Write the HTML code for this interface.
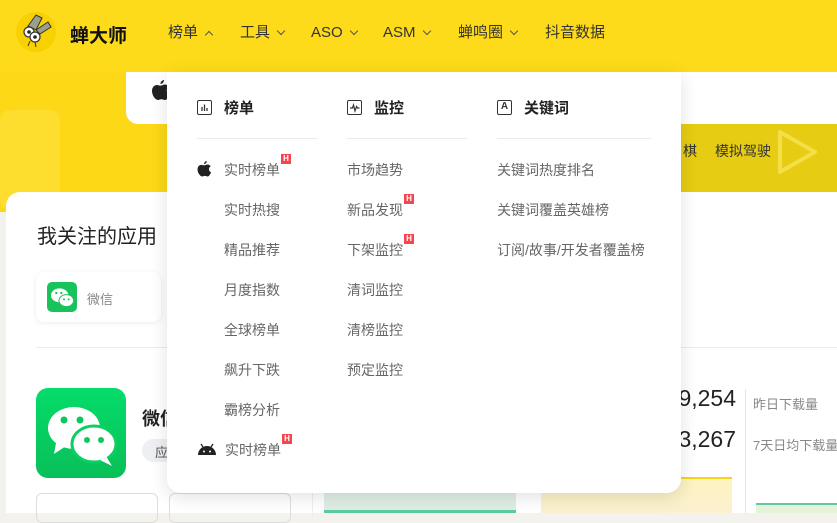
<!DOCTYPE html>
<html><head><meta charset="utf-8"><style>
*{margin:0;padding:0;box-sizing:border-box}
body{width:837px;height:513px;overflow:hidden;position:relative;background:#f3f2ec;font-family:"Liberation Sans","Noto Sans CJK SC",sans-serif;}
.abs{position:absolute}
.hdr{left:0;top:0;width:837px;height:72px;background:#fddb1a}
.ban{left:0;top:72px;width:837px;height:140px;background:#fcd816}
.nav{top:23px;height:20px;line-height:20px;font-size:15px;color:#333;white-space:nowrap;display:flex;align-items:center}
.nav .c{display:inline-block;width:6px;height:6px;border-right:1px solid #555;border-bottom:1px solid #555;transform:rotate(45deg);margin-left:8px;position:relative;top:-2px}
.nav .u{transform:rotate(-135deg);top:2px}
.card{background:#fff}
.dd{left:167px;top:72px;width:514px;height:421px;background:#fff;border-radius:0 0 14px 14px;box-shadow:0 4px 18px rgba(0,0,0,.12)}
.hd{font-size:15px;font-weight:bold;color:#222;top:97px}
.ln{height:1px;background:#e9eaf0;top:138px}
.it{font-size:14px;color:#666;white-space:nowrap}
.H{display:inline-block;width:10px;height:10px;background:#f5454f;color:#fff;font-size:8px;font-weight:bold;line-height:10px;text-align:center;position:absolute;right:-11px;top:-6px}
.ic{width:15px;height:15px;border:1.5px solid #333;border-radius:2px}
</style></head><body>
<div class="abs hdr"></div>
<div class="abs ban"></div>
<div class="abs" style="left:255px;top:150px;width:120px;height:120px;border-radius:50%;border:14px solid rgba(220,190,10,.4)"></div>
<div class="abs" style="left:0;top:110px;width:60px;height:100px;background:rgba(255,235,120,.25);border-radius:10px"></div>
<!-- logo -->
<div class="abs" style="left:16px;top:12px;width:40px;height:40px;border-radius:50%;background:#f8d100"></div>
<svg class="abs" style="left:16px;top:12px" width="40" height="40" viewBox="0 0 40 40">
<path d="M12 14 L20 3 L26 6 L20 18Z" fill="#9aa08a" stroke="#333" stroke-width="1"/>
<path d="M20 18 L32 10 L35 15 L24 22Z" fill="#9aa08a" stroke="#333" stroke-width="1"/>
<circle cx="13" cy="20" r="5" fill="#fff" stroke="#333" stroke-width="1.2"/><circle cx="19" cy="25" r="5" fill="#fff" stroke="#333" stroke-width="1.2"/>
<circle cx="13" cy="20" r="1.8" fill="#222"/><circle cx="19" cy="25" r="1.8" fill="#222"/>
<path d="M14 29 L12 34 M19 30 L20 35" stroke="#333" stroke-width="1"/>
</svg>
<div class="abs" style="left:70px;top:21px;font-size:19px;font-weight:bold;color:#111">蝉大师</div>
<div class="abs nav" style="left:168px">榜单<span class="c u"></span></div>
<div class="abs nav" style="left:240px">工具<span class="c"></span></div>
<div class="abs nav" style="left:311px">ASO<span class="c"></span></div>
<div class="abs nav" style="left:383px">ASM<span class="c"></span></div>
<div class="abs nav" style="left:458px">蝉鸣圈<span class="c"></span></div>
<div class="abs nav" style="left:545px">抖音数据</div>
<!-- top white card -->
<div class="abs card" style="left:126px;top:72px;width:711px;height:52px;border-radius:0 0 0 12px"></div>
<svg class="abs" style="left:152px;top:80px" width="18" height="22" viewBox="0 0 18 22"><path d="M12 0c0 2-1.5 4-3.5 4C8.3 2 10 .3 12 0zM9 5.5c1.3 0 2.5-1 4-1 1.5 0 3 .8 4 2.3-3.3 1.8-2.8 6.5.5 7.7-.8 2.300-2.5 5.5-4.5 5.5-1.3 0-1.8-.8-3.5-.8s-2.3.8-3.5.8C3.5 20 0 15.5 0 11c0-4 2.5-6 5-6 1.5 0 2.8 1 4 .5z" fill="#222"/></svg>
<div class="abs" style="left:681px;top:124px;width:156px;height:68px;background:#e6cc12"></div>
<div class="abs" style="left:683px;top:141px;font-size:14px;color:#333;white-space:nowrap">棋</div>
<div class="abs" style="left:715px;top:141px;font-size:14px;color:#333;white-space:nowrap">模拟驾驶</div>
<svg class="abs" style="left:775px;top:127px" width="45" height="50"><path d="M5 5 L40 25 L5 45Z" fill="none" stroke="rgba(255,235,110,.6)" stroke-width="4" stroke-linejoin="round"/></svg>
<!-- main card -->
<div class="abs card" style="left:6px;top:192px;width:831px;height:321px;border-radius:14px 0 0 0"></div>
<div class="abs" style="left:37px;top:220px;font-size:20px;color:#222">我关注的应用</div>
<div class="abs" style="left:36px;top:272px;width:125px;height:50px;border-radius:8px;background:#fff;box-shadow:0 1px 6px rgba(0,0,0,.08)"></div>
<div class="abs" style="left:47px;top:282px;width:30px;height:30px;border-radius:5px;background:#17c35a"></div>
<svg class="abs" style="left:47px;top:282px" width="30" height="30" viewBox="0 0 90 90"><ellipse cx="38" cy="40" rx="26" ry="21" fill="#fff"/><ellipse cx="58" cy="56" rx="22" ry="18" fill="#fff" stroke="#17c35a" stroke-width="3"/><circle cx="28" cy="33" r="3.5" fill="#17c35a"/><circle cx="43" cy="33" r="3.5" fill="#17c35a"/><circle cx="51" cy="52" r="3" fill="#17c35a"/><circle cx="65" cy="52" r="3" fill="#17c35a"/></svg>
<div class="abs" style="left:87px;top:289px;font-size:13px;color:#888">微信</div>
<div class="abs" style="left:36px;top:347px;width:801px;height:1px;background:#ececec"></div>
<div class="abs" style="left:36px;top:388px;width:90px;height:90px;border-radius:12px;background:linear-gradient(#06dc6a,#08bf58)"></div>
<svg class="abs" style="left:36px;top:388px" width="90" height="90" viewBox="0 0 90 90"><ellipse cx="38" cy="40" rx="26" ry="21" fill="#fff"/><path d="M20 55 L18 66 L30 58Z" fill="#fff"/><ellipse cx="58" cy="56" rx="22" ry="18" fill="#fff" stroke="#0ad062" stroke-width="3"/><path d="M70 68 L76 78 L64 72Z" fill="#fff"/><circle cx="28" cy="32" r="3.5" fill="#0bc85e"/><circle cx="44" cy="32" r="3.5" fill="#0bc85e"/><circle cx="51" cy="52" r="3" fill="#0bc85e"/><circle cx="65" cy="52" r="3" fill="#0bc85e"/></svg>
<div class="abs" style="left:142px;top:405px;font-size:18px;font-weight:bold;color:#222">微信</div>
<div class="abs" style="left:142px;top:439px;height:23px;border-radius:12px;background:#eeeff3;font-size:13px;color:#555;padding:3px 13px;white-space:nowrap">应用</div>
<div class="abs" style="left:36px;top:493px;width:122px;height:30px;border:1px solid #ddd;border-radius:6px"></div>
<div class="abs" style="left:169px;top:493px;width:122px;height:30px;border:1px solid #ddd;border-radius:6px"></div>
<div class="abs" style="left:312px;top:480px;width:1px;height:40px;background:#eee"></div>
<div class="abs" style="left:324px;top:493px;width:192px;height:20px;background:#dfeee5;border-bottom:3px solid #5fc9a0"></div>
<div class="abs" style="left:541px;top:477px;width:191px;height:36px;background:linear-gradient(#fdf3c0,#fbf0d0);border-top:2px solid #f5d41a"></div>
<div class="abs" style="left:620px;top:385px;font-size:23px;color:#222;width:116px;text-align:right">9,254</div>
<div class="abs" style="left:620px;top:426px;font-size:23px;color:#222;width:116px;text-align:right">3,267</div>
<div class="abs" style="left:745px;top:389px;width:1px;height:124px;background:#e6e8ef"></div>
<div class="abs" style="left:753px;top:394px;font-size:13px;color:#888">昨日下载量</div>
<div class="abs" style="left:753px;top:435px;font-size:13px;color:#888;white-space:nowrap">7天日均下载量</div>
<div class="abs" style="left:756px;top:503px;width:81px;height:10px;background:#e5f3d8;border-top:2px solid #5fc9a0"></div>
<!-- dropdown -->
<div class="abs dd"></div>
<div class="abs ic" style="left:197px;top:100px"></div>
<svg class="abs" style="left:197px;top:100px" width="15" height="15"><path d="M5 11V7M7.5 11V4.5M10 11V8" stroke="#333" stroke-width="1.3"/></svg>
<div class="abs hd" style="left:224px">榜单</div>
<div class="abs ic" style="left:347px;top:100px"></div>
<svg class="abs" style="left:347px;top:100px" width="15" height="15"><path d="M3 8H5.5L6.5 5L8 11L9.5 6.5L10.5 8H12.5" stroke="#333" stroke-width="1.2" fill="none"/></svg>
<div class="abs hd" style="left:374px">监控</div>
<div class="abs ic" style="left:497px;top:100px;font-size:10px;font-weight:bold;text-align:center;line-height:12px;color:#333">A</div>
<div class="abs hd" style="left:524px">关键词</div>
<div class="abs ln" style="left:197px;width:120px"></div>
<div class="abs ln" style="left:347px;width:120px"></div>
<div class="abs ln" style="left:497px;width:154px"></div>
<svg class="abs" style="left:197px;top:161px" width="15" height="17" viewBox="0 0 18 22"><path d="M12 0c0 2-1.5 4-3.5 4C8.3 2 10 .3 12 0zM9 5.5c1.3 0 2.5-1 4-1 1.5 0 3 .8 4 2.3-3.3 1.8-2.8 6.5.5 7.7-.8 2.3-2.5 5.5-4.5 5.5-1.3 0-1.8-.8-3.5-.8s-2.3.8-3.5.8C3.5 20 0 15.5 0 11c0-4 2.5-6 5-6 1.5 0 2.8 1 4 .5z" fill="#222"/></svg>
<div class="abs it" style="left:224px;top:160px">实时榜单<span class="H">H</span></div>
<div class="abs it" style="left:224px;top:200px">实时热搜</div>
<div class="abs it" style="left:224px;top:240px">精品推荐</div>
<div class="abs it" style="left:224px;top:280px">月度指数</div>
<div class="abs it" style="left:224px;top:320px">全球榜单</div>
<div class="abs it" style="left:224px;top:360px">飙升下跌</div>
<div class="abs it" style="left:224px;top:400px">霸榜分析</div>
<svg class="abs" style="left:197px;top:442px" width="20" height="14" viewBox="0 0 20 14"><path d="M1 13C1 8 5 4 10 4S19 8 19 13Z" fill="#222"/><path d="M4 2L6 5M16 2L14 5" stroke="#222" stroke-width="1.3"/><circle cx="7" cy="9.5" r="1" fill="#fff"/><circle cx="13" cy="9.5" r="1" fill="#fff"/></svg>
<div class="abs it" style="left:225px;top:440px">实时榜单<span class="H">H</span></div>
<div class="abs it" style="left:347px;top:160px">市场趋势</div>
<div class="abs it" style="left:347px;top:200px">新品发现<span class="H">H</span></div>
<div class="abs it" style="left:347px;top:240px">下架监控<span class="H">H</span></div>
<div class="abs it" style="left:347px;top:280px">清词监控</div>
<div class="abs it" style="left:347px;top:320px">清榜监控</div>
<div class="abs it" style="left:347px;top:360px">预定监控</div>
<div class="abs it" style="left:497px;top:160px">关键词热度排名</div>
<div class="abs it" style="left:497px;top:200px">关键词覆盖英雄榜</div>
<div class="abs it" style="left:497px;top:240px">订阅/故事/开发者覆盖榜</div>
</body></html>
